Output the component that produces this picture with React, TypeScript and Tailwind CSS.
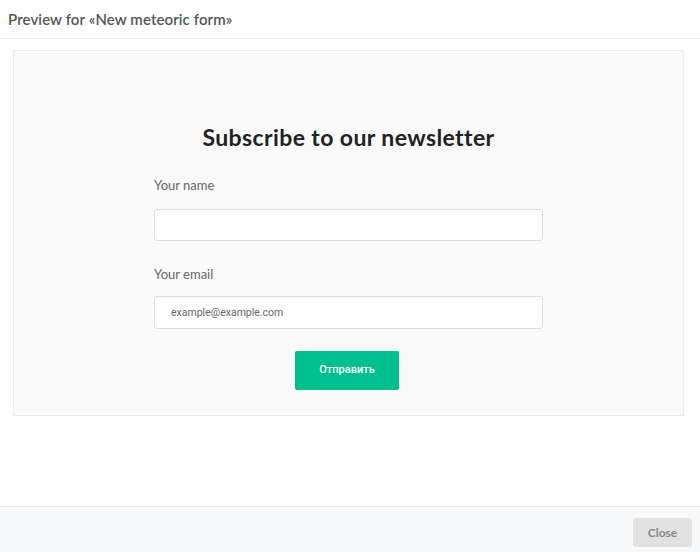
export default function App() {
  return (
    <div className="w-[700px] h-[552px] bg-white flex flex-col" style={{ fontFamily: "Lato, 'Noto Sans', sans-serif" }}>
      <div className="h-[39px] border-b border-[#ececec] flex items-center px-2 shrink-0">
        <span className="text-[15px] text-[#555] font-semibold tracking-[0.1px]">Preview for «New meteoric form»</span>
      </div>
      <div className="flex-1 pl-[13px] pr-[16px] pt-[11px]">
        <div className="h-[366px] bg-[#fafafa] border border-[#ececec] flex flex-col items-center pt-[71px]">
          <div className="w-[389px] flex flex-col">
            <h1 className="text-center text-[23px] font-bold text-[#222] leading-[30px] tracking-[0.4px]">Subscribe to our newsletter</h1>
            <label className="mt-[25px] text-[13px] text-[#666] leading-[16px]">Your name</label>
            <div className="mt-[16px] h-[32px] bg-white border border-[#dcdcdc] rounded-[3px]"></div>
            <label className="mt-[25px] text-[13px] text-[#666] leading-[16px]">Your email</label>
            <div className="mt-[14px] h-[33px] bg-white border border-[#dcdcdc] rounded-[3px] flex items-center pl-4">
              <span className="text-[10.5px] text-[#666]" style={{ fontFamily: "Roboto, sans-serif" }}>example@example.com</span>
            </div>
            <div className="mt-[22px] flex justify-start pl-[141px]">
              <button className="w-[104px] h-[39px] bg-[#00bf8f] rounded-[2px] text-white text-[11px] font-medium" style={{ fontFamily: "Roboto, sans-serif" }}>Отправить</button>
            </div>
          </div>
        </div>
      </div>
      <div className="h-[46px] bg-[#f8f9fa] border-t border-[#e6e6e6] flex items-start pt-[11px] justify-end pr-2 shrink-0">
        <button className="w-[59px] h-[29px] bg-[#e2e2e2] rounded-[3px] text-[12px] font-bold text-[#888]">Close</button>
      </div>
    </div>
  );
}
